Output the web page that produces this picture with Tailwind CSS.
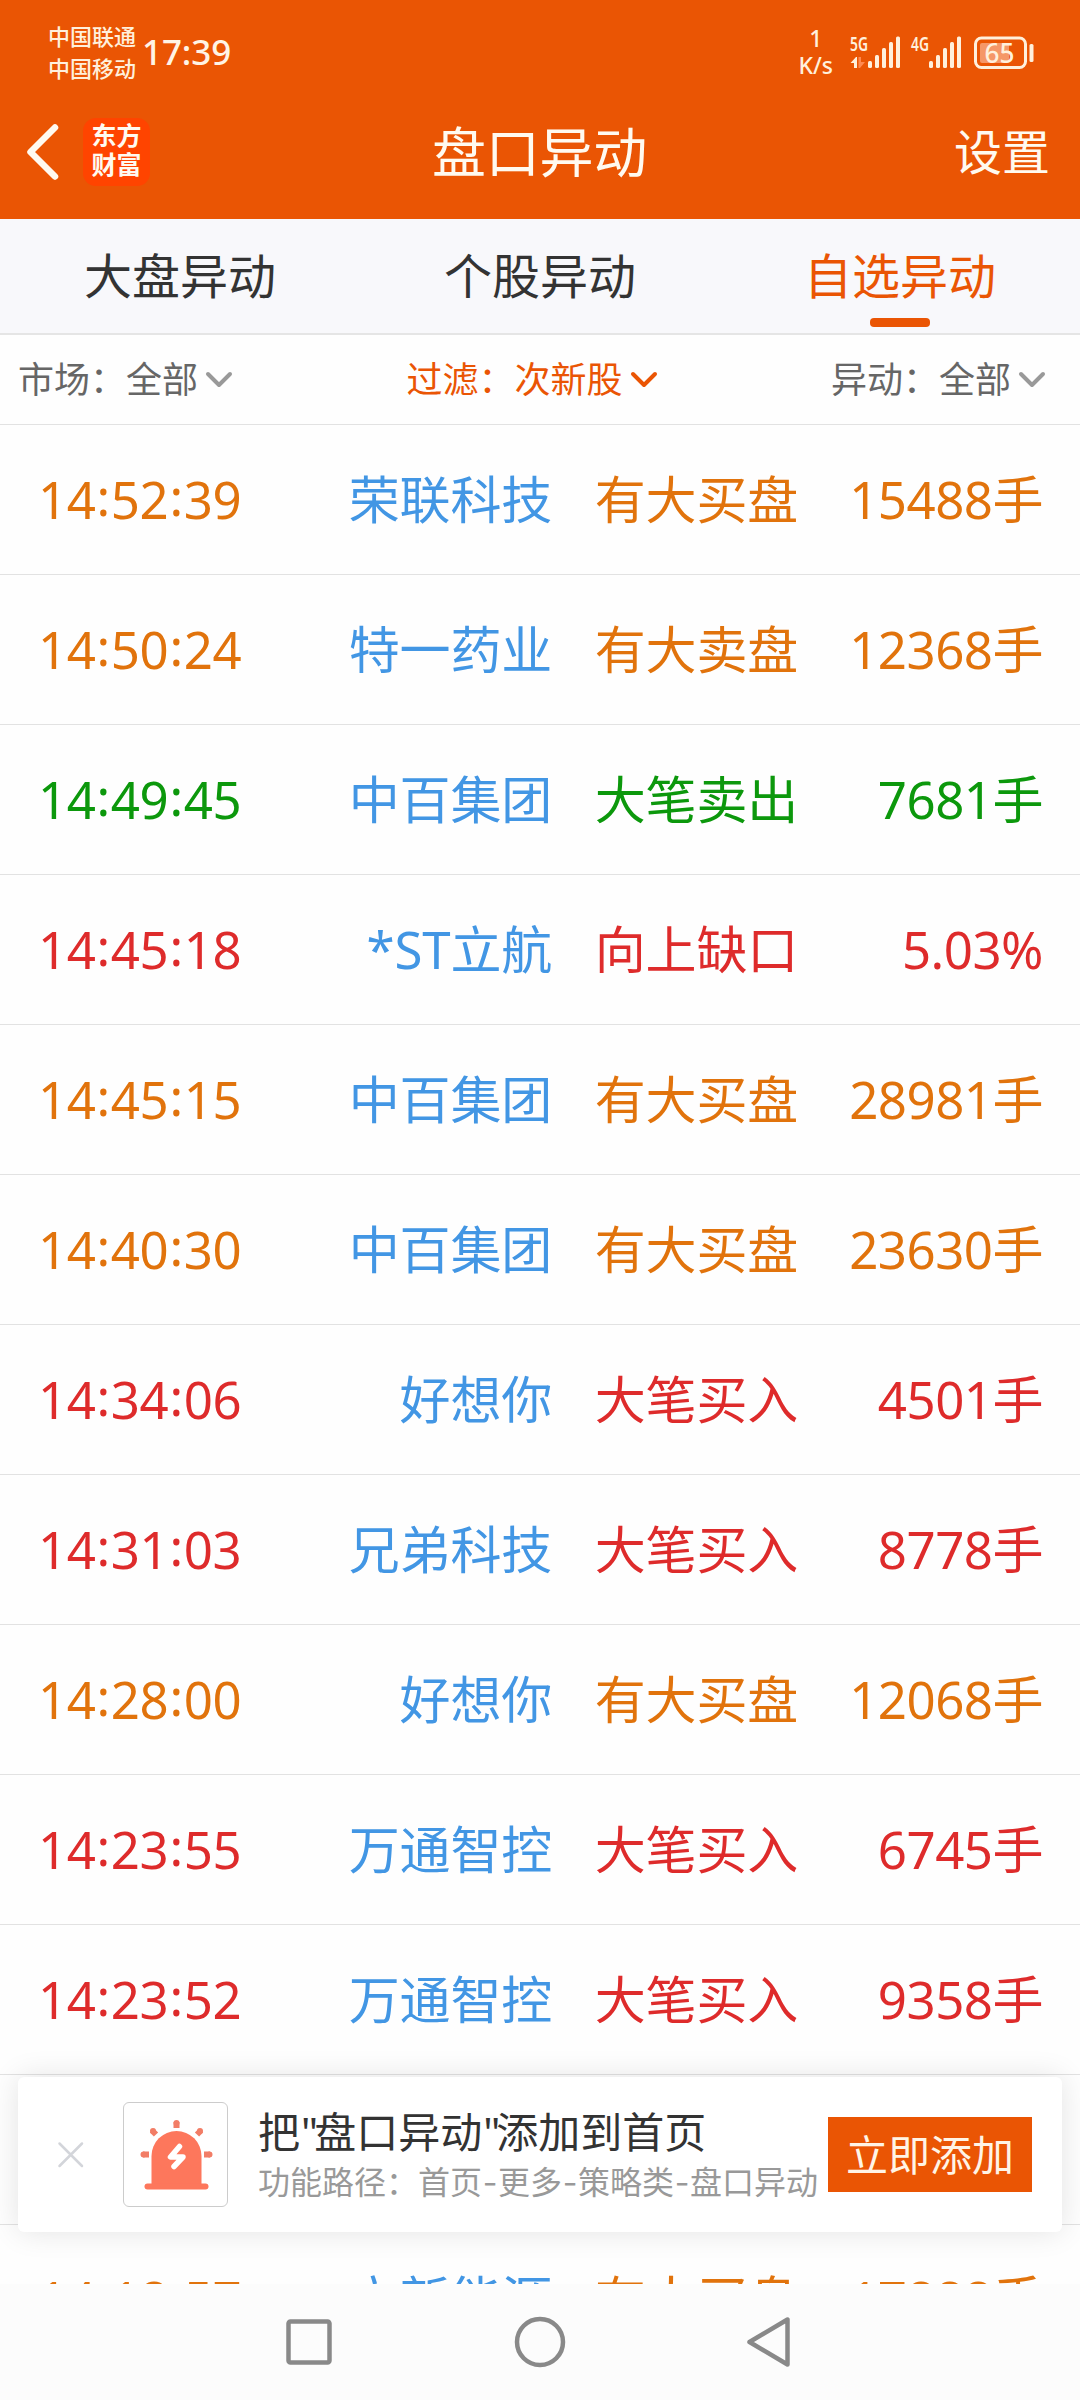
<!DOCTYPE html>
<html lang="zh-CN">

<head>
    <meta charset="UTF-8">
    <meta name="viewport" content="width=device-width, initial-scale=1.0">
    <script src="https://cdn.jsdelivr.net/npm/@tailwindcss/browser@4"></script>
    <title>盘口异动</title>
</head>

<body class="bg-white font-['Noto_Sans','Noto_Sans_CJK_SC',sans-serif]">
    <div class="relative w-[1080px] h-[2400px] flex flex-col overflow-hidden bg-[#fefefe]">
        <header class="h-[219px] shrink-0 bg-[#ea5504] text-[#fffaf0]">
            <!-- status bar -->
            <div class="h-[106px] pl-[48px] pr-[45px] flex items-center">
                <div class="text-[22px] leading-8 font-medium text-[#fff0dc] pb-[2px]">
                    <p>中国联通</p>
                    <p>中国移动</p>
                </div>
                <p class="ml-[6px] pb-[3px] text-[35px] leading-[35px] font-medium tracking-[-0.1px] text-[#fff4e6]">17:39</p>
                <div class="ml-auto mr-[16px] text-[23px] leading-[27px] font-medium text-center text-[#fff0dc] pb-[2px]">
                    <p>1</p>
                    <p>K/s</p>
                </div>
                <svg width="186" height="40" viewBox="849 33 186 40" fill="#fff0dc" font-family="Noto Sans">
                    <text x="850" y="51" font-size="19" font-weight="600" textLength="18" lengthAdjust="spacingAndGlyphs">5G</text>
                    <path d="M850.500 63l5.500-6h1v11h-3v-5z" />
                    <path d="M858.500 57h2.500v5h4l-5 6h-1.500z" fill="#ff8a50" />
                    <rect x="868" y="61" width="4" height="7" rx="1.5" />
                    <rect x="875" y="55" width="4" height="13" rx="1.5" />
                    <rect x="882" y="48" width="4" height="20" rx="1.5" />
                    <rect x="889" y="42" width="4" height="26" rx="1.5" />
                    <rect x="896" y="36.500" width="4" height="31.500" rx="1.500" />
                    <text x="911" y="51" font-size="19" font-weight="600" textLength="18" lengthAdjust="spacingAndGlyphs">4G</text>
                    <rect x="929" y="61" width="4" height="7" rx="1.5" />
                    <rect x="936" y="55" width="4" height="13" rx="1.5" />
                    <rect x="943" y="48" width="4" height="20" rx="1.5" />
                    <rect x="950" y="42" width="4" height="26" rx="1.5" />
                    <rect x="957" y="36.500" width="4" height="31.500" rx="1.500" />
                    <rect x="975.500" y="38" width="50" height="29.500" rx="6" fill="none" stroke="#fff0dc" stroke-width="3" />
                    <rect x="980" y="43" width="29" height="20" rx="2" fill="#f59768" />
                    <rect x="1029.500" y="44" width="4" height="18" rx="1.500" />
                    <text x="984.500" y="62.500" font-size="27" font-weight="500" textLength="30" lengthAdjust="spacingAndGlyphs">65</text>
                </svg>
            </div>
            <!-- title bar -->
            <div class="h-[92px] pl-[26px] pr-[30px] grid grid-cols-3 items-center">
                <div class="flex items-center">
                    <svg width="34" height="58" viewBox="0 0 34 58" fill="none" stroke="#fffaf0" stroke-width="6.500" stroke-linecap="round" stroke-linejoin="round">
                        <path d="M29 4.500L4.500 29L29 53.500" />
                    </svg>
                    <div class="ml-[23px] w-[67px] h-[68px] rounded-[13px] bg-[#ff4400] text-[25px] leading-[29px] font-bold text-center pt-[3px]">
                        <p>东方</p>
                        <p>财富</p>
                    </div>
                </div>
                <h1 class="text-[54px] leading-[60px] text-center pl-[3px] tracking-[-0.3px]">盘口异动</h1>
                <p class="text-[48px] leading-[60px] text-right">设置</p>
            </div>
        </header>

        <nav class="h-[116px] shrink-0 grid grid-cols-3 bg-[#f8f8fb] border-b-2 border-[#e5e5e5] text-[48px] leading-[114px] text-center text-[#333]">
            <p>大盘异动</p>
            <p>个股异动</p>
            <div class="relative text-[#ea5504]">自选异动
                <span class="absolute left-[150px] bottom-[6px] w-[60px] h-[9px] rounded-[4px] bg-[#ea5504]"></span>
            </div>
        </nav>

        <div class="h-[90px] shrink-0 pl-[18px] pr-[34px] flex justify-between items-center border-b border-[#e2e2e2] text-[36px] leading-[89px] text-[#666]">
            <div class="flex items-center gap-[7px]">
                市场：全部
                <svg class="text-[#999]" width="28" height="18" viewBox="0 0 28 18" fill="none" stroke="currentColor" stroke-width="4" stroke-linecap="round" stroke-linejoin="round"><path d="M3 3L14 14L25 3" /></svg>
            </div>
            <div class="flex items-center gap-[7px] text-[#ea5504]">
                过滤：次新股
                <svg width="28" height="18" viewBox="0 0 28 18" fill="none" stroke="currentColor" stroke-width="4" stroke-linecap="round" stroke-linejoin="round"><path d="M3 3L14 14L25 3" /></svg>
            </div>
            <div class="flex items-center gap-[7px]">
                异动：全部
                <svg class="text-[#999]" width="28" height="18" viewBox="0 0 28 18" fill="none" stroke="currentColor" stroke-width="4" stroke-linecap="round" stroke-linejoin="round"><path d="M3 3L14 14L25 3" /></svg>
            </div>
        </div>

        <main id="list" class="h-[1859px] shrink-0 overflow-hidden text-[51px]"></main>

        <!-- system navigation -->
        <div class="grow bg-[#fcfcfc] flex justify-center pt-[32px]">
            <svg width="512" height="52" viewBox="284 2316 512 52" fill="none" stroke="#898989" stroke-width="4.500" stroke-linejoin="round">
                <rect x="288.500" y="2321.500" width="41" height="41" rx="2" />
                <circle cx="540" cy="2342" r="23" />
                <path d="M787.500 2319.500V2364.500L749.500 2342Z" />
            </svg>
        </div>

        <!-- add to home banner -->
        <div class="absolute left-[18px] top-[2077px] w-[1044px] h-[155px] rounded-[6px] bg-white shadow-[0_0_30px_rgba(0,0,0,0.11)] flex items-center pl-[39px] pr-[30px]">
            <svg width="28" height="28" viewBox="0 0 28 28" stroke="#d3d5da" stroke-width="2.500" stroke-linecap="round"><path d="M2.500 2.500L25 25M25 2.500L2.500 25" /></svg>
            <div class="ml-[38px] w-[105px] h-[105px] shrink-0 rounded-[6px] border border-[#ccc] flex items-center justify-center">
                <svg width="76" height="76" viewBox="137 2117 76 76" fill="#fd775c" stroke="#fd775c">
                    <path stroke="none" d="M150.500 2185V2156a25 25 0 0 1 50 0V2185Z" />
                    <path d="M146.500 2186.500H204.500" stroke-width="6" stroke-linecap="round" />
                    <g stroke="#f27d66" stroke-width="6">
                        <path d="M175.500 2122V2128M142 2154.500H148M203 2154.500H209M151 2130.500L155 2134.500M200 2130.500L196 2134.500" />
                        <path d="M175.500 2123h.01M142.500 2154.500h.01M208.500 2154.500h.01M152 2131h.01M199 2131h.01" stroke-linecap="round" />
                    </g>
                    <path d="M178.500 2146.500L169.500 2157H182L173 2166.500" fill="none" stroke="#fff" stroke-width="5.500" stroke-linecap="round" stroke-linejoin="round" />
                </svg>
            </div>
            <div class="ml-[30px] pt-[6px] whitespace-nowrap">
                <p class="text-[42px] leading-[50px] text-[#333]">把<span class="pl-[1px] tracking-[-4px]">"</span>盘口异动<span class="pl-[1px] tracking-[-4px]">"</span>添加到首页</p>
                <p class="text-[32px] leading-[50px] text-[#999]">功能路径：首页<span class="inline-block w-4 text-center font-['Inter']">-</span>更多<span class="inline-block w-4 text-center font-['Inter']">-</span>策略类<span class="inline-block w-4 text-center font-['Inter']">-</span>盘口异动</p>
            </div>
            <button class="ml-auto w-[204px] h-[75px] shrink-0 bg-[#ea5504] text-[42px] leading-[73px] text-[#fff4e6]">立即添加</button>
        </div>
    </div>
</body>
<script>
    const colors = {
        orange: "text-[#e1730c]",
        green: "text-[#0c980c]",
        red: "text-[#de2b2b]"
    }

    const rows = [
        ["14:52:39", "荣联科技", "有大买盘", "15488手", "orange"],
        ["14:50:24", "特一药业", "有大卖盘", "12368手", "orange"],
        ["14:49:45", "中百集团", "大笔卖出", "7681手", "green"],
        ["14:45:18", "*ST立航", "向上缺口", "5.03%", "red"],
        ["14:45:15", "中百集团", "有大买盘", "28981手", "orange"],
        ["14:40:30", "中百集团", "有大买盘", "23630手", "orange"],
        ["14:34:06", "好想你", "大笔买入", "4501手", "red"],
        ["14:31:03", "兄弟科技", "大笔买入", "8778手", "red"],
        ["14:28:00", "好想你", "有大买盘", "12068手", "orange"],
        ["14:23:55", "万通智控", "大笔买入", "6745手", "red"],
        ["14:23:52", "万通智控", "大笔买入", "9358手", "red"],
        ["", "", "", "", "red"],
        ["14:18:57", "立新能源", "有大买盘", "17888手", "orange"]
    ]

    const list = document.getElementById("list")
    for (const [time, name, type, value, color] of rows) {
        const row = document.createElement("div")
        row.className = "h-[150px] pl-[38px] pr-[37px] flex border-b border-[#e2e2e2] leading-[149px] whitespace-nowrap " + colors[color]
        // colons sit at the middle of the digits
        const timeHtml = time.replaceAll(":", '<span class="relative -top-[3px] px-[1px]">:</span>')
        row.innerHTML = `
            <span class="w-[213px] tracking-[-0.4px]">${timeHtml}</span>
            <span class="w-[301px] text-right tracking-[-0.2px] text-[#4296e4]">${name}</span>
            <span class="w-[246px] text-right tracking-[-0.2px]">${type}</span>
            <span class="grow text-right tracking-[-0.5px]">${value}</span>`
        list.appendChild(row)
    }
</script>

</html>
